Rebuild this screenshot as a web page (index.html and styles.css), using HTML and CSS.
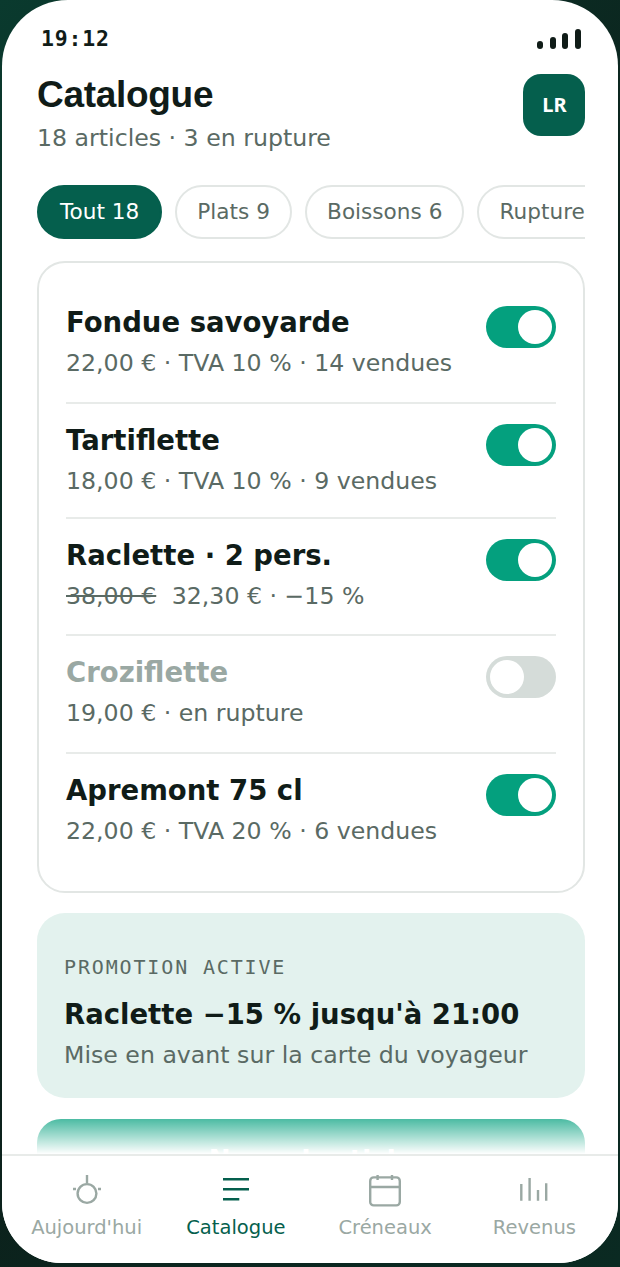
FILE: index.html
```html
<!DOCTYPE html>
<html lang="fr">
<head>
  <meta charset="UTF-8" />
  <title>Catalogue</title>
  <link rel="stylesheet" href="styles.css">
</head>
<body>
  <div class="screen">
    <div class="status-bar">
      <span class="clock">19:12</span>
      <div class="signal"><i class="s1"></i><i class="s2"></i><i class="s3"></i><i class="s4"></i></div>
    </div>

    <div class="content">
      <div class="page-head">
        <div>
          <h1>Catalogue</h1>
          <p class="sub">18 articles · 3 en rupture</p>
        </div>
        <div class="avatar">LR</div>
      </div>

      <div class="chips">
        <span class="chip active">Tout 18</span>
        <span class="chip">Plats 9</span>
        <span class="chip">Boissons 6</span>
        <span class="chip">Rupture 3</span>
      </div>

      <div class="card">
        <div class="item">
          <div>
            <div class="name">Fondue savoyarde</div>
            <div class="meta">22,00 € · TVA 10 % · 14 vendues</div>
          </div>
          <div class="toggle on"></div>
        </div>
        <div class="item">
          <div>
            <div class="name">Tartiflette</div>
            <div class="meta">18,00 € · TVA 10 % · 9 vendues</div>
          </div>
          <div class="toggle on"></div>
        </div>
        <div class="item">
          <div>
            <div class="name">Raclette · 2 pers.</div>
            <div class="meta"><s>38,00 €</s> 32,30 € · −15 %</div>
          </div>
          <div class="toggle on"></div>
        </div>
        <div class="item off">
          <div>
            <div class="name">Croziflette</div>
            <div class="meta">19,00 € · en rupture</div>
          </div>
          <div class="toggle"></div>
        </div>
        <div class="item">
          <div>
            <div class="name">Apremont 75 cl</div>
            <div class="meta">22,00 € · TVA 20 % · 6 vendues</div>
          </div>
          <div class="toggle on"></div>
        </div>
      </div>

      <div class="promo">
        <div class="promo-label">PROMOTION ACTIVE</div>
        <div class="promo-title">Raclette −15 % jusqu'à 21:00</div>
        <div class="promo-text">Mise en avant sur la carte du voyageur</div>
      </div>

      <div class="add-btn">Nouvel article</div>
    </div>

    <div class="fade"></div>

    <nav class="tabbar">
      <div class="tab">
        <svg width="32" height="32" viewBox="0 0 32 32" fill="none" stroke="currentColor" stroke-width="2.4"><circle cx="16" cy="18.5" r="9.4"/><path d="M16 0v8M2 14h3M27 14h3"/></svg>
        <span>Aujourd'hui</span>
      </div>
      <div class="tab current">
        <svg width="32" height="32" viewBox="0 0 32 32" fill="none" stroke="currentColor" stroke-width="2.5"><path d="M3 4.3h26M3 14.3h26M3 24.3h16.3"/></svg>
        <span>Catalogue</span>
      </div>
      <div class="tab">
        <svg width="32" height="32" viewBox="0 0 32 32" fill="none" stroke="currentColor" stroke-width="2.4"><rect x="1.2" y="2.4" width="29.6" height="28" rx="3.5"/><path d="M1.2 12h29.6M8.6 0v5M23 0v5"/></svg>
        <span>Créneaux</span>
      </div>
      <div class="tab">
        <svg width="32" height="32" viewBox="0 0 32 32" fill="none" stroke="currentColor" stroke-width="2.4"><path d="M3.3 9v16.7M11.6 3v22.7M20 15v10.7M28.2 8.3v17.4"/></svg>
        <span>Revenus</span>
      </div>
    </nav>
  </div>
</body>
</html>
```

FILE: styles.css
```css
* {
  margin: 0;
  padding: 0;
  box-sizing: border-box;
}

html, body {
  height: 100%;
}

body {
  background: linear-gradient(135deg, #0a3a2e, #0c1f1a 50%, #0a2a22);
  font-family: 'DejaVu Sans', sans-serif;
  color: #101c18;
  overflow: hidden;
}

.screen {
  position: relative;
  width: 616px;
  height: 1263px;
  margin-left: 2px;
  background: #fff;
  border-radius: 66px 66px 60px 60px;
  overflow: hidden;
  display: flex;
  flex-direction: column;
}

.status-bar {
  display: flex;
  flex: none;
  justify-content: space-between;
  align-items: center;
  height: 74px;
  padding: 2px 37px 0 39px;
}

.clock {
  font-family: 'DejaVu Sans Mono', monospace;
  font-weight: 700;
  font-size: 21.5px;
  letter-spacing: 0.8px;
}

.signal {
  display: flex;
  align-items: flex-end;
  gap: 6.6px;
  margin-top: 2px;
}

.signal i {
  display: block;
  width: 6px;
  background: #101c18;
  border-radius: 3px;
}

.s1 { height: 8px; }
.s2 { height: 12px; }
.s3 { height: 16px; }
.s4 { height: 20px; }

.content {
  flex: 1;
  min-height: 0;
  overflow: hidden;
  padding: 0 33px 0 35px;
}

.page-head {
  display: flex;
  justify-content: space-between;
  align-items: flex-start;
}

h1 {
  font-family: 'Liberation Sans', sans-serif;
  font-size: 37px;
  font-weight: 700;
  letter-spacing: -0.3px;
  line-height: 42px;
}

.sub {
  margin-top: 7px;
  font-size: 23.65px;
  line-height: 30px;
  color: #5a6a64;
}

.avatar {
  width: 62px;
  height: 62px;
  padding: 0 0 2px 1px;
  border-radius: 18px;
  background: #055f4d;
  color: #fff;
  font-family: 'Noto Sans', sans-serif;
  font-weight: 700;
  font-size: 20px;
  display: flex;
  align-items: center;
  justify-content: center;
}

.chips {
  display: flex;
  gap: 13px;
  margin-top: 32px;
  overflow: hidden;
}

.chip {
  flex: none;
  height: 54px;
  padding: 0 20.1px;
  border: 2px solid #e2e6e4;
  border-radius: 27px;
  font-size: 21.6px;
  line-height: 50px;
  color: #5a6a64;
}

.chip.active {
  padding: 0 21px;
  background: #055f4d;
  border-color: #055f4d;
  color: #fff;
}

.card {
  margin-top: 22px;
  padding: 22px 27px;
  border: 2px solid #e2e6e4;
  border-radius: 28px;
}

.item {
  display: flex;
  justify-content: space-between;
  align-items: flex-start;
  height: 118px;
  padding-top: 20px;
  border-bottom: 2px solid #e8ebe9;
}

.item + .item {
  padding-top: 19px;
}

.item:first-child {
  height: 119px;
}

.item:nth-child(2) {
  height: 115px;
}

.item:nth-child(3) {
  height: 117px;
}

.item:last-child {
  height: 115px;
  border-bottom: none;
}

.name {
  font-size: 27.5px;
  font-weight: 700;
  line-height: 34px;
}

.meta {
  margin-top: 8.5px;
  font-size: 23.65px;
  line-height: 30px;
  color: #5a6a64;
}

.meta s {
  margin-right: 8px;
}

.off .name {
  color: #9aa8a3;
}

.toggle {
  position: relative;
  width: 70px;
  height: 42px;
  margin-top: 1px;
  border-radius: 21px;
  background: #d5dcd9;
}

.item + .item .toggle {
  margin-top: 1px;
}

.toggle::after {
  content: "";
  position: absolute;
  top: 4px;
  left: 4px;
  width: 34px;
  height: 34px;
  border-radius: 50%;
  background: #fff;
}

.toggle.on {
  background: #04a07e;
}

.toggle.on::after {
  left: 32px;
}

.promo {
  margin-top: 20px;
  padding: 42px 27px 28px;
  background: #e3f2ee;
  border-radius: 28px;
}

.promo-label {
  font-family: 'DejaVu Sans Mono', monospace;
  font-size: 20px;
  letter-spacing: 1.85px;
  line-height: 24px;
  color: #5a6a64;
}

.promo-title {
  margin-top: 18px;
  font-size: 27.5px;
  font-weight: 700;
  line-height: 34px;
}

.promo-text {
  margin-top: 9px;
  font-size: 23.65px;
  line-height: 30px;
  color: #5a6a64;
}

.add-btn {
  margin-top: 21px;
  height: 76px;
  background: #04a07e;
  border-radius: 24px;
  color: #fff;
  font-size: 26px;
  font-weight: 700;
  text-align: center;
  line-height: 82px;
}

.fade {
  position: absolute;
  left: 0;
  right: 0;
  bottom: 109px;
  height: 49px;
  background: linear-gradient(rgba(255, 255, 255, 0), #fff);
}

.tabbar {
  flex: none;
  display: grid;
  grid-template-columns: repeat(4, 1fr);
  height: 109px;
  padding: 19px 9px 0 10px;
  border-top: 2px solid #e8ebe9;
  background: #fff;
  z-index: 1;
}

.tab {
  display: flex;
  flex-direction: column;
  align-items: center;
  gap: 9px;
  font-size: 19.5px;
  color: #9aa8a3;
}

.tab.current {
  color: #055f4d;
}
```
